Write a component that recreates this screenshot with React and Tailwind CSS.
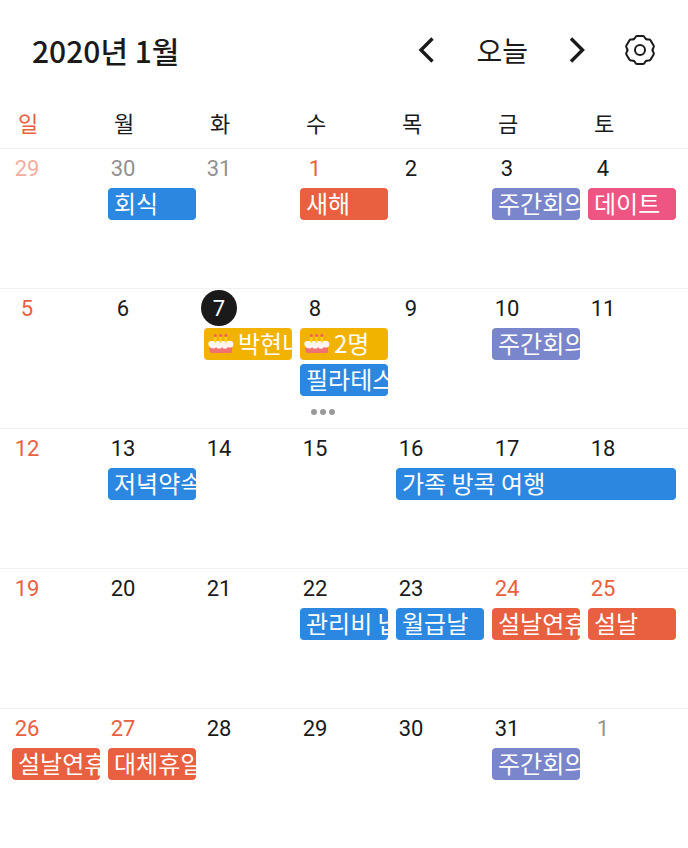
import React from "react";

const COLORS = {
  blue: "bg-[#2c87e0]",
  red: "bg-[#e86040]",
  purple: "bg-[#7986cb]",
  pink: "bg-[#ef5583]",
  yellow: "bg-[#f2b200]",
};

const WEEKDAYS = ["일", "월", "화", "수", "목", "금", "토"];

// Each event cell lists the events of one column; span covers several days.
const WEEKS = [
  {
    days: [
      { n: 29, tone: "outsideHoliday" },
      { n: 30, tone: "outside" },
      { n: 31, tone: "outside" },
      { n: 1, tone: "holiday" },
      { n: 2 },
      { n: 3 },
      { n: 4 },
    ],
    cells: [
      {},
      { events: [{ title: "회식", color: "blue" }] },
      {},
      { events: [{ title: "새해", color: "red" }] },
      {},
      { events: [{ title: "주간회의", color: "purple" }] },
      { events: [{ title: "데이트", color: "pink" }] },
    ],
  },
  {
    days: [
      { n: 5, tone: "holiday" },
      { n: 6 },
      { n: 7, tone: "today" },
      { n: 8 },
      { n: 9 },
      { n: 10 },
      { n: 11 },
    ],
    cells: [
      {},
      {},
      { events: [{ title: "박현나", color: "yellow", cake: true }] },
      {
        events: [
          { title: "2명", color: "yellow", cake: true },
          { title: "필라테스", color: "blue" },
        ],
        more: true,
      },
      {},
      { events: [{ title: "주간회의", color: "purple" }] },
      {},
    ],
  },
  {
    days: [
      { n: 12, tone: "holiday" },
      { n: 13 },
      { n: 14 },
      { n: 15 },
      { n: 16 },
      { n: 17 },
      { n: 18 },
    ],
    cells: [
      {},
      { events: [{ title: "저녁약속", color: "blue" }] },
      {},
      {},
      { span: 3, events: [{ title: "가족 방콕 여행", color: "blue" }] },
    ],
  },
  {
    days: [
      { n: 19, tone: "holiday" },
      { n: 20 },
      { n: 21 },
      { n: 22 },
      { n: 23 },
      { n: 24, tone: "holiday" },
      { n: 25, tone: "holiday" },
    ],
    cells: [
      {},
      {},
      {},
      { events: [{ title: "관리비 납부", color: "blue" }] },
      { events: [{ title: "월급날", color: "blue" }] },
      { events: [{ title: "설날연휴", color: "red" }] },
      { events: [{ title: "설날", color: "red" }] },
    ],
  },
  {
    days: [
      { n: 26, tone: "holiday" },
      { n: 27, tone: "holiday" },
      { n: 28 },
      { n: 29 },
      { n: 30 },
      { n: 31 },
      { n: 1, tone: "outside" },
    ],
    cells: [
      { events: [{ title: "설날연휴", color: "red" }] },
      { events: [{ title: "대체휴일", color: "red" }] },
      {},
      {},
      {},
      { events: [{ title: "주간회의", color: "purple" }] },
      {},
    ],
  },
];

const TONES = {
  normal: "text-[#1a1a1a]",
  holiday: "text-[#e86040]",
  outside: "text-[#929292]",
  outsideHoliday: "text-[#f4ae9e]",
  today: "rounded-full bg-[#1a1a1a] text-white",
};

function Gear() {
  return (
    <svg viewBox="-16 -16 32 32" className="size-8" fill="none" stroke="currentColor" strokeWidth="2" strokeLinecap="round" strokeLinejoin="round" aria-hidden="true">
      {[0, 60, 120, 180, 240, 300].map((angle) => (
        <path
          key={angle}
          transform={`rotate(${angle})`}
          d="M-6.3 -10.9C-5.2 -11.5 -4.9 -12.2 -4.6 -12.9Q-4.2 -14 -3 -14H3Q4.200 -14 4.600 -12.9C4.900 -12.2 5.200 -11.5 6.300 -10.9"
        />
      ))}
      <circle r="5" />
    </svg>
  );
}

function Cake() {
  return (
    <svg viewBox="0 0 26 24" className="h-6 w-[26px] shrink-0" aria-hidden="true">
      <path d="M1.500 14H24V19.500Q24 21 22.500 21H3Q1.500 21 1.500 19.500Z" fill="#f27173" />
      <path
        d="M3 9H22.500Q25.400 9.300 25.400 12Q25.200 15.500 22.500 15.500Q21 15.500 20.300 15Q18.600 17 16.600 16.800Q14.800 16.600 14 15.300Q12.600 17 10.600 16.800Q9 16.600 8.200 15.200Q7 16.600 5 16.500Q1 16 .300 12Q.300 9.300 3 9Z"
        fill="#fff5ef"
      />
      <g fill="#fbd31b">
        <rect x="6.200" y="4" width="2.200" height="6.500" />
        <rect x="11.500" y="4" width="2.200" height="6.500" />
        <rect x="16.800" y="4" width="2.200" height="6.500" />
      </g>
      <g fill="#ee5f5f">
        <circle cx="7.300" cy="3.500" r="1.500" />
        <circle cx="12.600" cy="3.500" r="1.500" />
        <circle cx="17.900" cy="3.500" r="1.500" />
      </g>
    </svg>
  );
}

function EventChip({ title, color, cake }) {
  return (
    <button
      type="button"
      className={`flex h-8 w-full items-center gap-1 overflow-hidden rounded text-left text-2xl leading-8 whitespace-nowrap text-white ${
        cake ? "pl-1" : "pl-[6px]"
      } ${COLORS[color]}`}
    >
      {cake && <Cake />}
      <span className="min-w-0 overflow-hidden pb-0.5">{title}</span>
    </button>
  );
}

function Week({ days, cells }) {
  return (
    <tbody className="block min-h-[140px] border-t border-[#f1f1f1] pt-px">
      <tr className="grid grid-cols-7 gap-x-2 px-3">
        {days.map((day, i) => (
          <td key={i} className="p-0">
            <time
              className={`-ml-[3px] flex size-9 items-center justify-center pt-0.5 font-[Roboto,sans-serif] text-[22px] leading-8 ${
                TONES[day.tone || "normal"]
              }`}
            >
              {day.n}
            </time>
          </td>
        ))}
      </tr>
      <tr className="grid grid-cols-7 gap-x-2 px-3 pt-0.5">
        {cells.map((cell, i) => (
          <td
            key={i}
            colSpan={cell.span || 1}
            className={`flex min-w-0 flex-col gap-1 p-0 ${cell.span === 3 ? "col-span-3" : ""}`}
          >
            {cell.events?.map((event) => (
              <EventChip key={event.title} {...event} />
            ))}
            {cell.more && (
              <button type="button" aria-label="일정 더보기" className="flex h-6 items-center gap-[3px] pl-[11px]">
                <span className="size-[6px] rounded-full bg-[#999]" />
                <span className="size-[6px] rounded-full bg-[#999]" />
                <span className="size-[6px] rounded-full bg-[#999]" />
              </button>
            )}
          </td>
        ))}
      </tr>
    </tbody>
  );
}

export default function App() {
  return (
    <main className="min-h-screen bg-white font-['Noto_Sans_CJK_KR',sans-serif] text-[#1a1a1a]">
      <header className="flex h-[100px] items-center justify-between px-8">
        <h1 className="text-[30px] leading-10 font-medium">2020년 1월</h1>
        <nav aria-label="월 이동" className="flex items-center gap-8">
          <button type="button" aria-label="이전 달" className="size-8">
            <svg viewBox="0 0 32 32" className="size-8" fill="none" stroke="currentColor" strokeWidth="3.400" aria-hidden="true">
              <path d="M20.500 4.500L9 16L20.500 27.500" />
            </svg>
          </button>
          <button type="button" className="text-[28px] leading-10">
            오늘
          </button>
          <button type="button" aria-label="다음 달" className="size-8">
            <svg viewBox="0 0 32 32" className="size-8" fill="none" stroke="currentColor" strokeWidth="3.400" aria-hidden="true">
              <path d="M11 4.500L22.500 16L11 27.500" />
            </svg>
          </button>
          <button type="button" aria-label="설정" className="size-8">
            <Gear />
          </button>
        </nav>
      </header>

      <table className="block w-full">
        <thead className="block">
          <tr className="grid h-12 grid-cols-7 items-center gap-x-2 px-3 pb-1">
            {WEEKDAYS.map((day, i) => (
              <th
                key={day}
                scope="col"
                className={`w-8 p-0 text-center text-[22px] leading-8 font-normal ${i === 0 ? "text-[#e86040]" : ""}`}
              >
                {day}
              </th>
            ))}
          </tr>
        </thead>
        {WEEKS.map((week, i) => (
          <Week key={i} {...week} />
        ))}
      </table>
    </main>
  );
}
